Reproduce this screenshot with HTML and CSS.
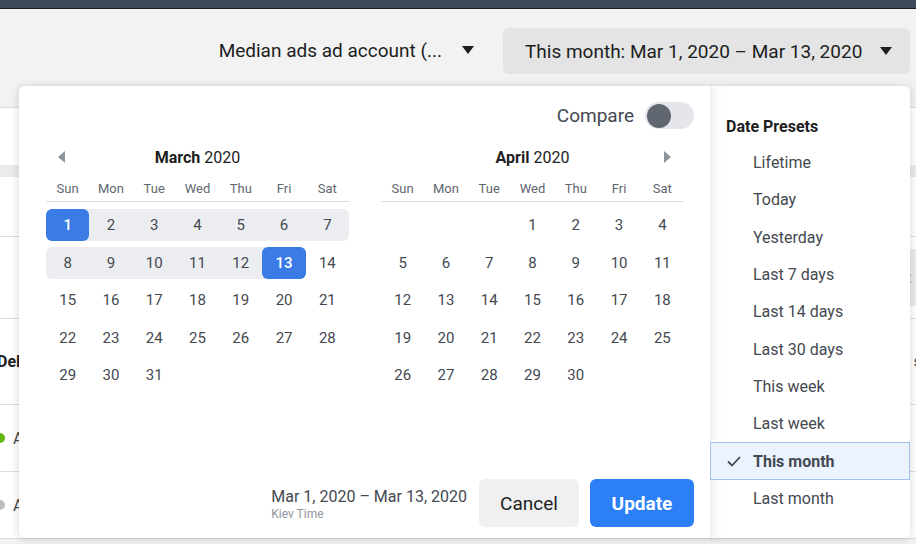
FILE: index.html
```html
<!DOCTYPE html>
<html>
<head>
<meta charset="utf-8">
<link rel="stylesheet" href="styles.css">
</head>
<body>
<div class="topbar"></div>
<div class="toolbar">
  <div class="account">Median ads ad account (... <svg class="caret" width="12" height="8" viewBox="0 0 12 8"><path d="M0 0H12L6 8Z" fill="#1c1e21"/></svg></div>
  <div class="datebtn"><span>This month: Mar 1, 2020 – Mar 13, 2020</span><svg class="caret" width="12" height="8" viewBox="0 0 12 8"><path d="M0 0H12L6 8Z" fill="#1c1e21"/></svg></div>
</div>
<div class="content">
  <div class="r r0"></div>
  <div class="r r1"></div>
  <div class="r r2"></div>
  <div class="r r3"></div>
  <div class="r r4"><span class="side">rt</span></div>
  <div class="r r5"><b class="del">Del</b><b class="sright">s</b></div>
  <div class="r r6"><span class="dot green"></span><span class="a">A</span></div>
  <div class="r r7"><span class="dot gray"></span><span class="a">A</span></div>
</div>

<div class="popup">
  <div class="cal">
    <div class="compare-row">
      <span>Compare</span>
      <span class="toggle"><span class="knob"></span></span>
    </div>
    <div class="months">
      <div class="month">
        <div class="mhead">
          <svg class="arr" width="7" height="12" viewBox="0 0 7 12"><path d="M7 0V12L0 6Z" fill="#8d949e"/></svg>
          <div class="mtitle"><b>March</b> 2020</div>
          <span></span>
        </div>
        <div class="dow"><span>Sun</span><span>Mon</span><span>Tue</span><span>Wed</span><span>Thu</span><span>Fri</span><span>Sat</span></div>
        <div class="weeks">
          <div class="week"><span class="d rng sel first"><i>1</i></span><span class="d rng">2</span><span class="d rng">3</span><span class="d rng">4</span><span class="d rng">5</span><span class="d rng">6</span><span class="d rng last">7</span></div>
          <div class="week"><span class="d rng first">8</span><span class="d rng">9</span><span class="d rng">10</span><span class="d rng">11</span><span class="d rng">12</span><span class="d rng sel last"><i>13</i></span><span class="d">14</span></div>
          <div class="week"><span class="d">15</span><span class="d">16</span><span class="d">17</span><span class="d">18</span><span class="d">19</span><span class="d">20</span><span class="d">21</span></div>
          <div class="week"><span class="d">22</span><span class="d">23</span><span class="d">24</span><span class="d">25</span><span class="d">26</span><span class="d">27</span><span class="d">28</span></div>
          <div class="week"><span class="d">29</span><span class="d">30</span><span class="d">31</span><span class="d"></span><span class="d"></span><span class="d"></span><span class="d"></span></div>
        </div>
      </div>
      <div class="month">
        <div class="mhead">
          <span></span>
          <div class="mtitle"><b>April</b> 2020</div>
          <svg class="arr right" width="7" height="12" viewBox="0 0 7 12"><path d="M0 0V12L7 6Z" fill="#8d949e"/></svg>
        </div>
        <div class="dow"><span>Sun</span><span>Mon</span><span>Tue</span><span>Wed</span><span>Thu</span><span>Fri</span><span>Sat</span></div>
        <div class="weeks">
          <div class="week"><span class="d"></span><span class="d"></span><span class="d"></span><span class="d">1</span><span class="d">2</span><span class="d">3</span><span class="d">4</span></div>
          <div class="week"><span class="d">5</span><span class="d">6</span><span class="d">7</span><span class="d">8</span><span class="d">9</span><span class="d">10</span><span class="d">11</span></div>
          <div class="week"><span class="d">12</span><span class="d">13</span><span class="d">14</span><span class="d">15</span><span class="d">16</span><span class="d">17</span><span class="d">18</span></div>
          <div class="week"><span class="d">19</span><span class="d">20</span><span class="d">21</span><span class="d">22</span><span class="d">23</span><span class="d">24</span><span class="d">25</span></div>
          <div class="week"><span class="d">26</span><span class="d">27</span><span class="d">28</span><span class="d">29</span><span class="d">30</span><span class="d"></span><span class="d"></span></div>
        </div>
      </div>
    </div>
    <div class="footer">
      <div class="range">
        <div class="rtext">Mar 1, 2020 – Mar 13, 2020</div>
        <div class="tz">Kiev Time</div>
      </div>
      <button class="btn cancel">Cancel</button>
      <button class="btn update">Update</button>
    </div>
  </div>
  <div class="presets">
    <div class="ph">Date Presets</div>
    <div class="pi"><span class="chk"></span>Lifetime</div>
    <div class="pi"><span class="chk"></span>Today</div>
    <div class="pi"><span class="chk"></span>Yesterday</div>
    <div class="pi"><span class="chk"></span>Last 7 days</div>
    <div class="pi"><span class="chk"></span>Last 14 days</div>
    <div class="pi"><span class="chk"></span>Last 30 days</div>
    <div class="pi"><span class="chk"></span>This week</div>
    <div class="pi"><span class="chk"></span>Last week</div>
    <div class="pi active"><span class="chk"><svg width="14" height="11" viewBox="0 0 14 11"><path d="M1 5.5L5 9.5L13 1" fill="none" stroke="#444950" stroke-width="1.8"/></svg></span>This month</div>
    <div class="pi"><span class="chk"></span>Last month</div>
  </div>
</div>
</body>
</html>
```

FILE: styles.css
```css
* { box-sizing: border-box; }
html, body { margin: 0; padding: 0; }
body {
  width: 916px;
  height: 544px;
  overflow: hidden;
  background: #f2f2f2;
  font-family: Roboto, "Liberation Sans", sans-serif;
  color: #444950;
  position: relative;
}
.topbar {
  height: 9px;
  background: #3d4a5a;
  border-bottom: 1px solid #1c1e21;
}
.toolbar {
  height: 77px;
  display: flex;
  justify-content: flex-end;
  align-items: flex-start;
  padding: 19px 6px 0 0;
  gap: 29px;
}
.account {
  height: 46px;
  display: flex;
  align-items: center;
  gap: 20px;
  font-size: 19px;
  color: #1c1e21;
  margin-top: -1px;
}
.datebtn {
  width: 407px;
  height: 46px;
  background: #e4e4e4;
  border-radius: 6px;
  display: flex;
  align-items: center;
  justify-content: space-between;
  padding: 0 18px 0 22px;
  font-size: 19px;
  color: #1c1e21;
}
.caret { display: block; }

.content .r { position: relative; background: #fff; }
.r0 { height: 22px; background: #f2f2f2 !important; border-bottom: 1px solid #dadde1; }
.r1 { height: 57px; }
.r2 { height: 12px; background: #ebebeb !important; }
.r3 { height: 60px; border-bottom: 1px solid #dadde1; }
.r4 { height: 82px; border-bottom: 1px solid #dadde1; display: flex; justify-content: flex-end; align-items: center; }
.side { background: #ebebeb; width: 14px; height: 57px; color: #d08a2c; font-size: 14px; display: flex; align-items: center; }
.r5 { height: 86px; border-bottom: 1px solid #dadde1; display: flex; justify-content: space-between; align-items: center; font-size: 16px; color: #1c1e21; }
.del { margin-left: -3px; }
.sright { margin-right: -6px; color: #606770; }
.r6, .r7 { height: 67px; border-bottom: 1px solid #dadde1; display: flex; align-items: center; gap: 8px; }
.dot { width: 10px; height: 10px; border-radius: 50%; margin-left: -5px; }
.green { background: #63b60f; }
.gray { background: #bcc0c4; }
.a { font-size: 16px; color: #444950; }

.popup {
  position: absolute;
  left: 19px;
  top: 86px;
  width: 891px;
  height: 452px;
  background: #fff;
  border-radius: 6px;
  box-shadow: 0 1px 10px rgba(0, 0, 0, 0.16);
  display: flex;
  overflow: hidden;
}
.cal {
  flex: 1;
  display: flex;
  flex-direction: column;
  padding: 16px 16px 11px 27px;
}
.compare-row {
  height: 27px;
  display: flex;
  justify-content: flex-end;
  align-items: center;
  gap: 11px;
  font-size: 19px;
  color: #444950;
}
.toggle {
  width: 49px;
  height: 27px;
  border-radius: 14px;
  background: #e4e6eb;
  display: flex;
  align-items: center;
  padding-left: 2px;
}
.knob {
  width: 24px;
  height: 24px;
  border-radius: 50%;
  background: #606770;
}
.months {
  display: flex;
  gap: 32px;
  margin-top: 18px;
}
.month { width: 303px; }
.mhead {
  height: 20px;
  display: grid;
  grid-template-columns: 30px 1fr 30px;
  align-items: center;
}
.arr { margin-left: 12px; }
.arr.right { margin-left: 0; justify-self: end; margin-right: 13px; }
.mtitle { text-align: center; font-size: 16px; color: #1c1e21; }
.mtitle b { font-weight: 700; }
.dow {
  margin-top: 8px;
  height: 27px;
  display: grid;
  grid-template-columns: repeat(7, 1fr);
  align-items: center;
  text-align: center;
  font-size: 13px;
  color: #606770;
  border-bottom: 1px solid #dadde1;
}
.weeks { margin-top: 7px; }
.week {
  display: grid;
  grid-template-columns: repeat(7, 1fr);
  height: 32px;
  margin-bottom: 5.6px;
}
.d {
  display: flex;
  align-items: center;
  justify-content: center;
  font-size: 15px;
  color: #444950;
}
.d.rng { background: #ebedf0; }
.d.first { border-radius: 6px 0 0 6px; }
.d.last { border-radius: 0 6px 6px 0; }
.d.sel { position: relative; }
.d.sel i {
  font-style: normal;
  width: 100%;
  height: 100%;
  display: flex;
  align-items: center;
  justify-content: center;
  background: #3b7be6;
  border-radius: 6px;
  color: #fff;
  font-weight: 500;
}
.footer {
  margin-top: auto;
  display: flex;
  justify-content: flex-end;
  align-items: center;
  gap: 11px;
}
.range { margin-right: 1px; margin-top: 4px; }
.rtext { font-size: 16px; color: #444950; line-height: 18px; }
.tz { font-size: 12px; color: #90949c; line-height: 17px; }
.btn {
  height: 48px;
  border: none;
  border-radius: 6px;
  font-family: Roboto, "Liberation Sans", sans-serif;
  font-size: 19px;
  padding: 0;
}
.cancel { width: 100px; background: #f0f0f0; color: #1c1e21; }
.update { width: 104px; background: #2d7ff6; color: #fff; font-weight: 700; }

.presets {
  width: 200px;
  background: linear-gradient(to right, #f1f1f1, #fbfbfb 6px, #fff 14px);
  padding-top: 24px;
}
.ph {
  height: 34px;
  line-height: 34px;
  padding-left: 16px;
  font-size: 16px;
  font-weight: 700;
  color: #1c1e21;
}
.pi {
  height: 37.3px;
  display: flex;
  align-items: center;
  font-size: 16px;
  color: #444950;
}
.chk { width: 43px; flex: none; display: flex; align-items: center; padding-left: 17px; }
.pi.active {
  background: #ebf3ff;
  border: 1px solid #a4c1f2;
  font-weight: 700;
}
.pi.active .chk { padding-left: 16px; width: 42px; }
```
